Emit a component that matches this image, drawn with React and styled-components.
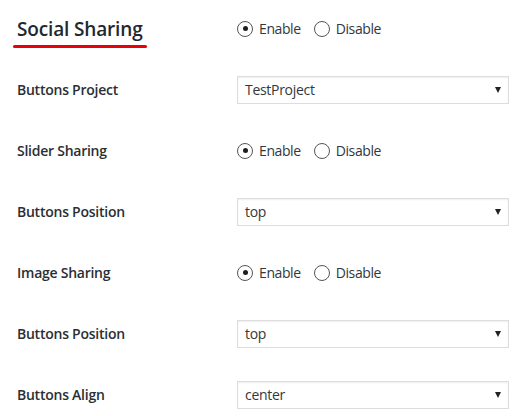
import React from "react";
import styled, { createGlobalStyle } from "styled-components";

const Global = createGlobalStyle`
  html, body { margin: 0; padding: 0; background: #fff; }
  body { font-family: "Open Sans", "Noto Sans", sans-serif; }
`;

const Page = styled.div`
  width: 526px;
  height: 416px;
  overflow: hidden;
  background: #fff;
  padding-left: 17px;
  padding-top: 1px;
  box-sizing: border-box;
`;

const Row = styled.div`
  display: grid;
  grid-template-columns: 220px 272px;
  align-items: center;
  height: ${(p) => (p.$head ? 58 : 61)}px;
  padding-bottom: ${(p) => (p.$head ? 3 : 0)}px;
  box-sizing: border-box;
`;

const TitleCell = styled.div`
  display: flex;
  flex-direction: column;
  align-items: flex-start;
  padding-top: 7px;
`;

const Title = styled.h2`
  margin: 0;
  font-size: 19px;
  line-height: 24px;
  font-weight: 600;
  color: #23282d;
  letter-spacing: -0.15px;
`;

const Underline = styled.div`
  margin-left: -4px;
  margin-top: 4px;
  width: 134px;
  height: 3px;
  border-radius: 2px;
  background: #e8000b;
`;

const Label = styled.div`
  font-size: 14px;
  line-height: 18px;
  font-weight: 600;
  color: #2a2f34;
  letter-spacing: -0.25px;
`;

const RadioGroup = styled.div`
  display: flex;
  align-items: center;
  gap: 13px;
`;

const RadioItem = styled.label`
  display: flex;
  align-items: center;
  gap: 6px;
  font-size: 14px;
  line-height: 18px;
  color: #32373c;
  letter-spacing: -0.4px;
`;

const Circle = styled.span`
  width: 16px;
  height: 16px;
  box-sizing: border-box;
  border: 1px solid #555;
  border-radius: 50%;
  display: flex;
  align-items: center;
  justify-content: center;
  &::after {
    content: "";
    display: ${(p) => (p.$on ? "block" : "none")};
    width: 5px;
    height: 5px;
    border-radius: 50%;
    background: #1e1e1e;
  }
`;

const Select = styled.div`
  width: 272px;
  height: 28px;
  box-sizing: border-box;
  border: 1px solid #ddd;
  box-shadow: inset 0 1px 2px rgba(0, 0, 0, 0.07);
  display: flex;
  align-items: center;
  justify-content: space-between;
  padding: 0 7px 0 7px;
  font-size: 14px;
  color: #32373c;
  letter-spacing: -0.3px;
`;

const Arrow = styled.span`
  width: 0;
  height: 0;
  border-left: 3px solid transparent;
  border-right: 3px solid transparent;
  border-top: 6px solid #222;
`;

function Radios() {
  return (
    <RadioGroup>
      <RadioItem>
        <Circle $on />
        Enable
      </RadioItem>
      <RadioItem>
        <Circle />
        Disable
      </RadioItem>
    </RadioGroup>
  );
}

function Dropdown({ value }) {
  return (
    <Select>
      <span>{value}</span>
      <Arrow />
    </Select>
  );
}

const rows = [
  { label: "Buttons Project", type: "select", value: "TestProject" },
  { label: "Slider Sharing", type: "radio" },
  { label: "Buttons Position", type: "select", value: "top" },
  { label: "Image Sharing", type: "radio" },
  { label: "Buttons Position", type: "select", value: "top" },
  { label: "Buttons Align", type: "select", value: "center" },
];

export default function App() {
  return (
    <>
      <Global />
      <Page>
        <Row $head>
          <TitleCell>
            <Title>Social Sharing</Title>
            <Underline />
          </TitleCell>
          <Radios />
        </Row>
        {rows.map((r, i) => (
          <Row key={i}>
            <Label>{r.label}</Label>
            {r.type === "select" ? <Dropdown value={r.value} /> : <Radios />}
          </Row>
        ))}
      </Page>
    </>
  );
}
